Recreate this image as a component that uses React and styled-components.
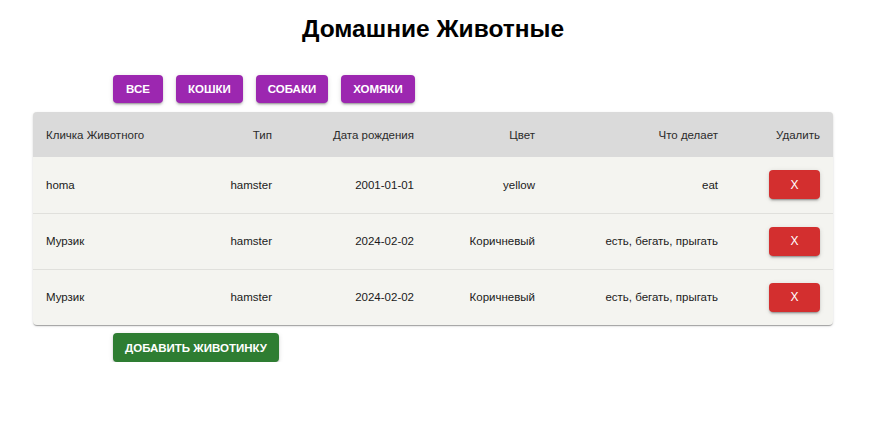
import React, { useState } from 'react'
import styled, { createGlobalStyle } from 'styled-components'

const GlobalStyle = createGlobalStyle`
    body {
        margin: 0;
        background: #fff;
        font-family: "Liberation Sans", Arial, sans-serif;
    }
`

const pets = [
    { id: 1, name: 'homa', type: 'hamster', birth: '2001-01-01', color: 'yellow', does: 'eat' },
    { id: 2, name: 'Мурзик', type: 'hamster', birth: '2024-02-02', color: 'Коричневый', does: 'есть, бегать, прыгать' },
    { id: 3, name: 'Мурзик', type: 'hamster', birth: '2024-02-02', color: 'Коричневый', does: 'есть, бегать, прыгать' },
]

const filters = ['Все', 'Кошки', 'Собаки', 'Хомяки']

export default function App() {
    const [filter, setFilter] = useState('Все')

    return (
        <>
            <GlobalStyle />
            <Page>
                <Content>
                    <Title>Домашние Животные</Title>
                    <FilterBar>
                        {filters.map((f) => (
                            <Button key={f} $color="#9c27b0" onClick={() => setFilter(f)}>
                                {f}
                            </Button>
                        ))}
                    </FilterBar>
                    <TableWrap>
                        <Table>
                            <colgroup>
                                <col style={{ width: 160 }} />
                                <col style={{ width: 92 }} />
                                <col style={{ width: 142 }} />
                                <col style={{ width: 121 }} />
                                <col style={{ width: 183 }} />
                                <col style={{ width: 102 }} />
                            </colgroup>
                            <thead>
                                <HeadRow>
                                    <Th>Кличка Животного</Th>
                                    <Th $right>Тип</Th>
                                    <Th $right>Дата рождения</Th>
                                    <Th $right>Цвет</Th>
                                    <Th $right>Что делает</Th>
                                    <Th $right>Удалить</Th>
                                </HeadRow>
                            </thead>
                            <tbody>
                                {pets.map((p, i) => (
                                    <Row key={p.id} $last={i === pets.length - 1}>
                                        <Td>{p.name}</Td>
                                        <Td $right>{p.type}</Td>
                                        <Td $right>{p.birth}</Td>
                                        <Td $right>{p.color}</Td>
                                        <Td $right>{p.does}</Td>
                                        <Td $right>
                                            <DeleteButton>X</DeleteButton>
                                        </Td>
                                    </Row>
                                ))}
                            </tbody>
                        </Table>
                    </TableWrap>
                    <AddBar>
                        <Button $color="#2e7d32" $tall>Добавить животинку</Button>
                    </AddBar>
                </Content>
            </Page>
        </>
    )
}

const Page = styled.div`
    width: 875px;
    padding-right: 9px;
    box-sizing: border-box;
`

const Content = styled.div`
    width: 800px;
    margin: 0 auto;
`

const Title = styled.h1`
    margin: 0;
    padding-top: 15px;
    height: 60px;
    box-sizing: border-box;
    text-align: center;
    font-size: 24.5px;
    line-height: 28px;
    font-weight: 700;
    color: #000;
`

const FilterBar = styled.div`
    display: flex;
    gap: 13px;
    padding-left: 80px;
    margin-top: 15px;
    margin-bottom: 9px;
`

const Button = styled.button`
    min-width: 50px;
    height: ${(p) => (p.$tall ? '29px' : '28px')};
    padding: 0 12px;
    border: none;
    border-radius: 4px;
    background: ${(p) => p.$color};
    color: #fff;
    font-family: "Liberation Sans", Arial, sans-serif;
    font-size: 11.5px;
    font-weight: 700;
    text-transform: uppercase;
    letter-spacing: 0;
    cursor: pointer;
    box-shadow: 0 3px 1px -2px rgba(0,0,0,0.2), 0 2px 2px 0 rgba(0,0,0,0.14), 0 1px 5px 0 rgba(0,0,0,0.12);
`

const TableWrap = styled.div`
    border-radius: 4px;
    overflow: hidden;
    background: #f4f4f0;
    box-shadow: 0 2px 1px -1px rgba(0,0,0,0.2), 0 1px 1px 0 rgba(0,0,0,0.14), 0 1px 3px 0 rgba(0,0,0,0.12);
`

const Table = styled.table`
    width: 800px;
    table-layout: fixed;
    border-collapse: collapse;
    font-size: 11.5px;
`

const HeadRow = styled.tr`
    background: #dadada;
    height: 45px;
`

const Th = styled.th`
    padding: 0 13px;
    font-weight: 400;
    color: #2b2b2b;
    text-align: ${(p) => (p.$right ? 'right' : 'left')};
`

const Row = styled.tr`
    height: 56px;
    border-bottom: ${(p) => (p.$last ? 'none' : '1px solid #e0e0dc')};
`

const Td = styled.td`
    padding: 0 13px;
    color: #1a1a1a;
    text-align: ${(p) => (p.$right ? 'right' : 'left')};
    white-space: nowrap;
`

const DeleteButton = styled.button`
    width: 51px;
    height: 29px;
    border: none;
    border-radius: 4px;
    background: #d32f2f;
    color: #fff;
    font-family: "Liberation Sans", Arial, sans-serif;
    font-size: 12px;
    cursor: pointer;
    box-shadow: 0 3px 1px -2px rgba(0,0,0,0.2), 0 2px 2px 0 rgba(0,0,0,0.14), 0 1px 5px 0 rgba(0,0,0,0.12);
`

const AddBar = styled.div`
    display: flex;
    padding-left: 80px;
    margin-top: 8px;
`
